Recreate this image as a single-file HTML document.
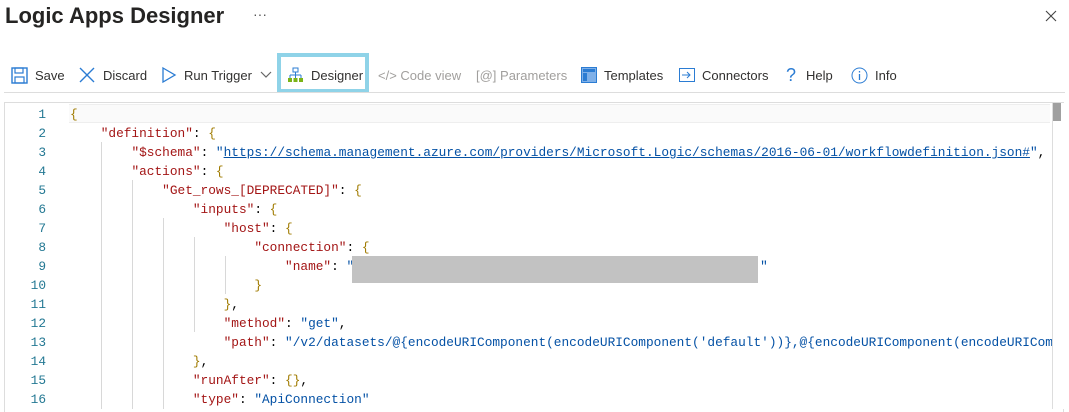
<!DOCTYPE html>
<html><head><meta charset="utf-8"><style>
body{margin:0;width:1069px;height:409px;background:#fff;overflow:hidden;font-family:"Liberation Sans",sans-serif;position:relative}
.title{position:absolute;left:5px;top:3px;font-size:22px;color:#252423;font-weight:600}
.dots{position:absolute;left:253px;top:6px;font-size:14px;color:#555}
.tb{position:absolute;top:64px;font-size:13px;color:#323130;display:flex;align-items:center;gap:7px;height:22px}
.dis{color:#a19f9d}
.hl{position:absolute;left:277px;top:53px;width:92px;height:40px;border:4px solid #8fd3e8;box-sizing:border-box}
.sep{position:absolute;left:4px;right:4px;top:92px;border-top:1px solid #ddd}
.ed{position:absolute;left:4px;top:102px;width:1060px;height:310px;border:1px solid #ddd;border-bottom:none;box-sizing:border-box;background:#fff}
.l1{position:absolute;left:69px;top:104px;width:981px;height:19px;background:#fafafa;border-top:1px solid #eee;border-bottom:1px solid #eee;box-sizing:border-box}
.sb{position:absolute;left:1053px;top:103px;width:8px;height:18px;background:#a0a0a0}
.code{position:absolute;left:0;top:105px;font-family:"Liberation Mono",monospace;font-size:12.8px;line-height:19px;white-space:pre;color:#000}
.ln{display:inline-block;width:46px;text-align:right;color:#237893;margin-right:24px}
.k{color:#a31515}.s{color:#0451a5}.b{color:#a07b00}
.u{color:#0451a5;text-decoration:underline}
.g{position:absolute;width:1px;background:#d8d8d8}
</style></head><body>
<div class="title">Logic Apps Designer</div><div class="dots">···</div>
<svg style="position:absolute;left:1045px;top:10px" width="12" height="12"><path d="M1 1L11 11M11 1L1 11" stroke="#444" stroke-width="1.1"/></svg>
<div class="tb" style="left:11px"><svg width="17" height="17" viewBox="0 0 17 17"><rect x="1" y="1" width="15" height="15" fill="none" stroke="#2b7cd3" stroke-width="1.4"/><rect x="4" y="1" width="8" height="5" fill="none" stroke="#2b7cd3" stroke-width="1.2"/><rect x="4" y="10" width="9" height="6" fill="none" stroke="#2b7cd3" stroke-width="1.2"/></svg>Save</div>
<div class="tb" style="left:78px"><svg width="18" height="18"><path d="M2 2L16 16M16 2L2 16" stroke="#2b7cd3" stroke-width="1.4"/></svg>Discard</div>
<div class="tb" style="left:161px"><svg width="16" height="18"><path d="M2 2L14 9L2 16Z" fill="none" stroke="#2b7cd3" stroke-width="1.3"/></svg>Run Trigger <svg width="14" height="10"><path d="M2 2L7 7L12 2" fill="none" stroke="#666" stroke-width="1.2"/></svg></div>
<div class="tb" style="left:287px"><svg width="17" height="16"><rect x="6" y="1" width="5" height="4" fill="none" stroke="#2b7cd3"/><path d="M8.5 5V8M3 8H14M3 8V11M14 8V11M8.5 8V11" stroke="#2b7cd3"/><rect x="1" y="11" width="4" height="4" fill="#7ab317"/><rect x="6.5" y="11" width="4" height="4" fill="#7ab317"/><rect x="12" y="11" width="4" height="4" fill="#7ab317"/></svg>Designer</div>
<div class="hl"></div>
<div class="tb dis" style="left:378px">&lt;/&gt; Code view</div>
<div class="tb dis" style="left:476px">[@] Parameters</div>
<div class="tb" style="left:581px"><svg width="16" height="16"><rect x="0.5" y="0.5" width="15" height="15" fill="#7fb0e8" stroke="#2b7cd3"/><rect x="2" y="2" width="12" height="3" fill="#2b7cd3"/><rect x="2" y="6" width="4" height="8" fill="#2b7cd3"/></svg>Templates</div>
<div class="tb" style="left:679px"><svg width="16" height="14"><rect x="0.5" y="0.5" width="15" height="13" fill="none" stroke="#2b7cd3"/><path d="M3 7H11M8 4L11 7L8 10" fill="none" stroke="#2b7cd3"/></svg>Connectors</div>
<div class="tb" style="left:786px"><span style="color:#2b7cd3;font-size:18px;margin-right:3px">?</span>Help</div>
<div class="tb" style="left:851px"><svg width="17" height="17"><circle cx="8.5" cy="8.5" r="7.5" fill="none" stroke="#2b7cd3"/><path d="M8.5 7V13M8.5 4V5.5" stroke="#2b7cd3" stroke-width="1.3"/></svg>Info</div>
<div class="sep"></div>
<div class="ed"></div><div class="l1"></div>
<div class="g" style="left:101px;top:142px;height:267px"></div>
<div class="g" style="left:132px;top:180px;height:229px"></div>
<div class="g" style="left:163px;top:218px;height:191px"></div>
<div class="g" style="left:194px;top:237px;height:95px"></div>
<div class="g" style="left:225px;top:256px;height:38px"></div>
<div class="code"><span class="ln">1</span><span class="b">{</span>
<span class="ln">2</span>    <span class="k">"definition"</span>: <span class="b">{</span>
<span class="ln">3</span>        <span class="k">"$schema"</span>: <span class="s">"</span><span class="u">https://schema.management.azure.com/providers/Microsoft.Logic/schemas/2016-06-01/workflowdefinition.json#</span><span class="s">"</span>,
<span class="ln">4</span>        <span class="k">"actions"</span>: <span class="b">{</span>
<span class="ln">5</span>            <span class="k">"Get_rows_[DEPRECATED]"</span>: <span class="b">{</span>
<span class="ln">6</span>                <span class="k">"inputs"</span>: <span class="b">{</span>
<span class="ln">7</span>                    <span class="k">"host"</span>: <span class="b">{</span>
<span class="ln">8</span>                        <span class="k">"connection"</span>: <span class="b">{</span>
<span class="ln">9</span>                            <span class="k">"name"</span>: <span class="s">"<span style="display:inline-block;width:406px;height:1px"></span>"</span>
<span class="ln">10</span>                        <span class="b">}</span>
<span class="ln">11</span>                    <span class="b">}</span>,
<span class="ln">12</span>                    <span class="k">"method"</span>: <span class="s">"get"</span>,
<span class="ln">13</span>                    <span class="k">"path"</span>: <span class="s">"/v2/datasets/@{encodeURIComponent(encodeURIComponent('default'))},@{encodeURIComponent(encodeURIComponent</span>
<span class="ln">14</span>                <span class="b">}</span>,
<span class="ln">15</span>                <span class="k">"runAfter"</span>: <span class="b">{}</span>,
<span class="ln">16</span>                <span class="k">"type"</span>: <span class="s">"ApiConnection"</span></div>
<div style="position:absolute;left:352px;top:256px;width:406px;height:27px;background:#c2c2c2"></div>
<div style="position:absolute;left:1052px;top:103px;width:17px;height:306px;background:#fff;border-left:1px solid #ddd"></div>
<div class="sb"></div>
</body></html>
